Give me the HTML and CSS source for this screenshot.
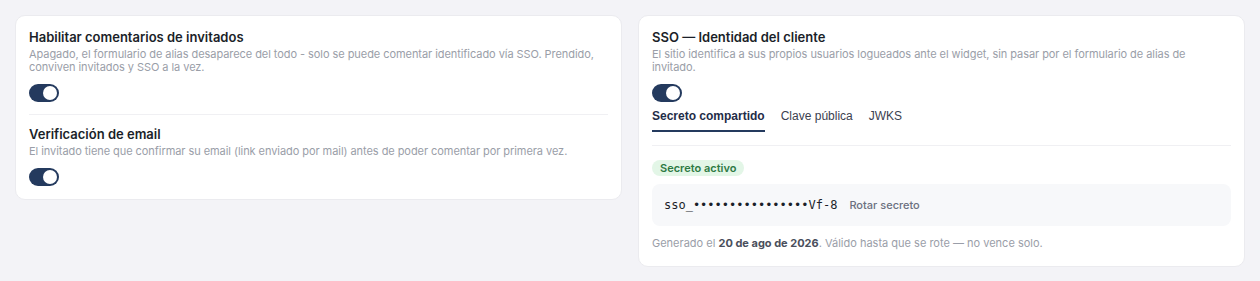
FILE: index.html
```html
<!DOCTYPE html>
<html lang="es">
<head>
<meta charset="utf-8">
<link rel="stylesheet" href="styles.css">
</head>
<body>
<div class="page">
  <section class="card">
    <div class="setting">
      <h3 class="title">Habilitar comentarios de invitados</h3>
      <p class="desc">Apagado, el formulario de alias desaparece del todo - solo se puede comentar identificado vía SSO. Prendido, conviven invitados y SSO a la vez.</p>
      <span class="toggle on"><span class="knob"></span></span>
    </div>
    <div class="setting divided">
      <h3 class="title">Verificación de email</h3>
      <p class="desc">El invitado tiene que confirmar su email (link enviado por mail) antes de poder comentar por primera vez.</p>
      <span class="toggle on"><span class="knob"></span></span>
    </div>
  </section>
  <section class="card card-sso">
    <div class="setting">
      <h3 class="title">SSO — Identidad del cliente</h3>
      <p class="desc">El sitio identifica a sus propios usuarios logueados ante el widget, sin pasar por el formulario de alias de invitado.</p>
      <span class="toggle on"><span class="knob"></span></span>
    </div>
    <nav class="tabs">
      <span class="tab active">Secreto compartido</span>
      <span class="tab">Clave pública</span>
      <span class="tab">JWKS</span>
    </nav>
    <div class="panel">
      <span class="badge">Secreto activo</span>
      <div class="secret">
        <code class="secret-value">sso_••••••••••••••••Vf-8</code>
        <span class="rotate">Rotar secreto</span>
      </div>
      <p class="meta">Generado el <strong>20 de ago de 2026</strong>. Válido hasta que se rote — no vence solo.</p>
    </div>
  </section>
</div>
</body>
</html>
```

FILE: styles.css
```css
* { box-sizing: border-box; }
html, body { margin: 0; padding: 0; }
body {
  background: #f3f3f7;
  font-family: Inter, "Noto Sans", sans-serif;
  color: #1b1f29;
}
.page {
  display: grid;
  grid-template-columns: 1fr 1fr;
  gap: 16px;
  padding: 15px 15px;
  align-items: start;
}
.card {
  background: #fff;
  border: 1px solid #ebebef;
  border-radius: 10px;
  padding: 13px 13px 13px;
}
.card-sso { padding-bottom: 16px; }
.setting { display: flex; flex-direction: column; align-items: flex-start; }
.setting.divided {
  border-top: 1px solid #f0f0f3;
  margin-top: 12px;
  padding-top: 11px;
}
.title {
  margin: 0 0 2px;
  font-size: 13px;
  line-height: 17px;
  font-weight: 600;
  color: #1b1f29;
}
.desc {
  margin: 0;
  font-size: 11px;
  line-height: 13px;
  color: #9a9ea8;
  letter-spacing: -0.06px;
}
.toggle {
  margin-top: 10px;
  width: 30px;
  height: 18px;
  border-radius: 9px;
  background: #243a5e;
  display: flex;
  align-items: center;
  justify-content: flex-end;
  padding: 0 2px;
}
.knob {
  width: 14px;
  height: 14px;
  border-radius: 50%;
  background: #fff;
}
.tabs {
  display: flex;
  gap: 16px;
  margin-top: 1px;
}
.tab {
  font-family: "Liberation Sans", Arial, sans-serif;
  font-size: 12px;
  line-height: 16px;
  color: #3b4150;
  padding: 5px 0 6px;
  border-bottom: 2px solid transparent;
}
.tab.active {
  color: #1f2d48;
  font-weight: 700;
  border-bottom-color: #243a5e;
}
.panel {
  margin-top: 13px;
  border-top: 1px solid #f0f0f3;
  padding-top: 14px;
  display: flex;
  flex-direction: column;
  align-items: flex-start;
}
.badge {
  background: #e3f6e7;
  color: #2e7a44;
  font-size: 11px;
  font-weight: 600;
  line-height: 16px;
  padding: 0 8px;
  border-radius: 8px;
}
.secret {
  margin-top: 8px;
  align-self: stretch;
  background: #f7f8fa;
  border-radius: 8px;
  padding: 0 12px;
  height: 42px;
  display: flex;
  align-items: center;
  gap: 12px;
}
.secret-value {
  font-family: "DejaVu Sans Mono", "Liberation Mono", monospace;
  font-size: 12px;
  color: #1b1f29;
}
.rotate {
  font-size: 11px;
  font-weight: 500;
  color: #6b7080;
}
.meta {
  margin: 11px 0 0;
  font-size: 11px;
  line-height: 13px;
  color: #9a9ea8;
}
.meta strong { color: #4a4f5c; font-weight: 700; }
```
